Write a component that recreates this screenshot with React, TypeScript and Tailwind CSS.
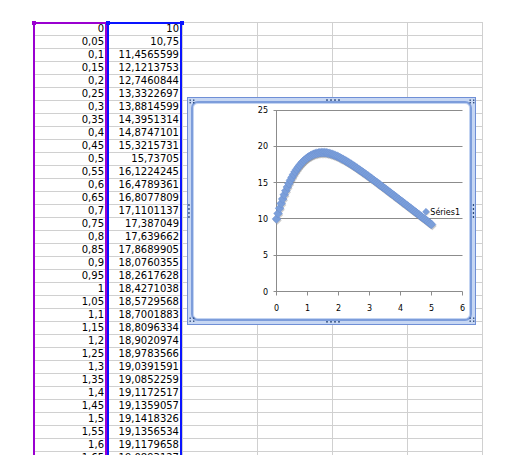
import React from "react";

const colA = [
  "0","0,05","0,1","0,15","0,2","0,25","0,3","0,35","0,4","0,45","0,5","0,55","0,6","0,65","0,7","0,75","0,8","0,85","0,9","0,95",
  "1","1,05","1,1","1,15","1,2","1,25","1,3","1,35","1,4","1,45","1,5","1,55","1,6","1,65",
];
const colB = [
  "10","10,75","11,4565599","12,1213753","12,7460844","13,3322697","13,8814599","14,3951314","14,8747101","15,3215731","15,73705",
  "16,1224245","16,4789361","16,8077809","17,1101137","17,387049","17,639662","17,8689905","18,0760355","18,2617628","18,4271038",
  "18,5729568","18,7001883","18,8096334","18,9020974","18,9783566","19,0391591","19,0852259","19,1172517","19,1359057","19,1418326",
  "19,1356534","19,1179658","19,0893127",
];

const restWidths = ["w-[75px]", "w-[75px]", "w-[75px]", "w-[75px]"];

function seriesValues(): [number, number][] {
  const pts: [number, number][] = [];
  for (let i = 0; i <= 100; i++) {
    const x = i * 0.05;
    let y: number;
    if (i <= 32) {
      y = parseFloat(colB[i].replace(",", "."));
    } else {
      const c = 3.3;
      const k = 2.0;
      const t = x - 1.5;
      y = 19.14 - c * (t - (1 - Math.exp(-k * t)) / k);
    }
    pts.push([x, y]);
  }
  return pts;
}

const X0 = 89.5;
const XU = 31;
const Y0 = 194.5;
const YU = 7.26;

function px(x: number) {
  return X0 + x * XU;
}
function py(v: number) {
  return Y0 - v * YU;
}
function diamond(x: number, y: number, r: number) {
  return `${x},${y - r} ${x + r},${y} ${x},${y + r} ${x - r},${y}`;
}

function Chart() {
  const pts = seriesValues();
  const grid = [5, 10, 15, 20, 25];
  const font = "'DejaVu Sans', Verdana, sans-serif";
  const dot = "#2f4c7e";
  return (
    <div className="absolute left-[187px] top-[97px] w-[289px] h-[228px] border border-[#6f8fd6] bg-[#c7d7f3] p-[3px]">
      <div className="h-full w-full rounded-[7px] border-2 border-[#7d9ddb] bg-white shadow-[inset_0_0_0_1px_#c3d4f2]" />
      <svg
        className="absolute left-[-1px] top-[-1px]"
        width={289}
        height={228}
        viewBox="0 0 289 228"
      >
        {grid.map((v) => {
          const y = Math.round(py(v) - 0.5) + 0.5;
          return (
            <line key={v} x1={X0 - 3} x2={275.5} y1={y} y2={y} stroke="#8c8c8c" strokeWidth={1} />
          );
        })}
        <line x1={X0} x2={X0} y1={13} y2={Y0} stroke="#8c8c8c" strokeWidth={1} />
        <line x1={X0 - 3} x2={275.5} y1={Y0} y2={Y0} stroke="#8c8c8c" strokeWidth={1} />
        {[0, 1, 2, 3, 4, 5, 6].map((i) => (
          <line key={i} x1={X0 + i * XU} x2={X0 + i * XU} y1={Y0} y2={Y0 + 4} stroke="#8c8c8c" strokeWidth={1} />
        ))}
        {[0, 5, 10, 15, 20, 25].map((v) => (
          <text key={v} x={81} y={py(v) + 3} textAnchor="end" fontFamily={font} fontSize={8} fill="#000">
            {v}
          </text>
        ))}
        {[0, 1, 2, 3, 4, 5, 6].map((i) => (
          <text key={i} x={X0 + i * XU} y={213.8} textAnchor="middle" fontFamily={font} fontSize={8} fill="#000">
            {i}
          </text>
        ))}
        {pts.map(([x, v], i) => (
          <polygon key={"s" + i} points={diamond(px(x) + 0.8, py(v) + 1.5, 4.4)} fill="#8e8e8e" opacity={0.45} />
        ))}
        {pts.map(([x, v], i) => (
          <polygon key={"m" + i} points={diamond(px(x), py(v), 4.4)} fill="#7b9fda" stroke="#6a8fd0" strokeWidth={0.5} />
        ))}
        <polygon points={diamond(239.8, 115.4, 3.4)} fill="#8e8e8e" opacity={0.45} />
        <polygon points={diamond(239, 114.7, 3.4)} fill="#7b9fda" stroke="#6a8fd0" strokeWidth={0.5} />
        <text x={243.3} y={118.3} fontFamily={font} fontSize={8} fill="#000">
          Séries1
        </text>
        {[
          [2.5, 2.5], [6, 2.5], [2.5, 5], [6, 5],
          [282.5, 2.5], [286, 2.5], [282.5, 5], [286, 5],
          [2.5, 220.5], [6, 220.5], [2.5, 223.5], [6, 223.5],
          [282.5, 220.5], [286, 220.5], [282.5, 223.5], [286, 223.5],
        ].map(([x, y], i) => (
          <rect key={"c" + i} x={x} y={y} width={1.4} height={1.4} fill={dot} />
        ))}
        {[139, 143, 147, 151].map((x) => (
          <rect key={"t" + x} x={x} y={2.4} width={2} height={1.3} fill={dot} />
        ))}
        {[139, 143, 147, 151].map((x) => (
          <rect key={"b" + x} x={x} y={224.2} width={2} height={1.3} fill={dot} />
        ))}
        {[107, 111, 115, 119].map((y) => (
          <rect key={"l" + y} x={1.3} y={y} width={1.3} height={2} fill={dot} />
        ))}
        {[107, 111, 115, 119].map((y) => (
          <rect key={"r" + y} x={285.8} y={y} width={1.3} height={2} fill={dot} />
        ))}
      </svg>
    </div>
  );
}

export default function App() {
  return (
    <div
      className="relative w-[505px] h-[455px] overflow-hidden bg-white text-black"
      style={{ fontFamily: "'DejaVu Sans', Verdana, sans-serif" }}
    >
      <div className="pt-[22px] pl-[33px]">
        <div className="flex w-fit flex-col border-l border-t border-[#d0d0d0]">
          {colA.map((a, i) => (
            <div key={i} className="flex h-[13px]">
              <div className="w-[73px] h-[13px] border-r border-b border-[#d0d0d0] pr-[2px] text-right text-[10px] leading-[12px] whitespace-nowrap">
                {a}
              </div>
              <div className="w-[76px] h-[13px] border-r border-b border-[#d0d0d0] pr-[3px] text-right text-[10px] leading-[12px] whitespace-nowrap">
                {colB[i]}
              </div>
              {restWidths.map((w, j) => (
                <div key={j} className={`${w} h-[13px] border-r border-b border-[#d0d0d0]`} />
              ))}
            </div>
          ))}
        </div>
      </div>

      <div className="absolute left-[33px] top-[22px] w-[74px] h-[440px] border-2 border-[#9a00d0]" />
      <div className="absolute left-[107px] top-[22px] w-[75px] h-[440px] border-2 border-[#0a14ff]" />
      <div className="absolute left-[32px] top-[21px] w-[4px] h-[4px] bg-[#9a00d0]" />
      <div className="absolute left-[106px] top-[21px] w-[4px] h-[4px] bg-[#0a14ff]" />
      <div className="absolute left-[180px] top-[21px] w-[4px] h-[4px] bg-[#0a14ff]" />

      <Chart />
    </div>
  );
}
